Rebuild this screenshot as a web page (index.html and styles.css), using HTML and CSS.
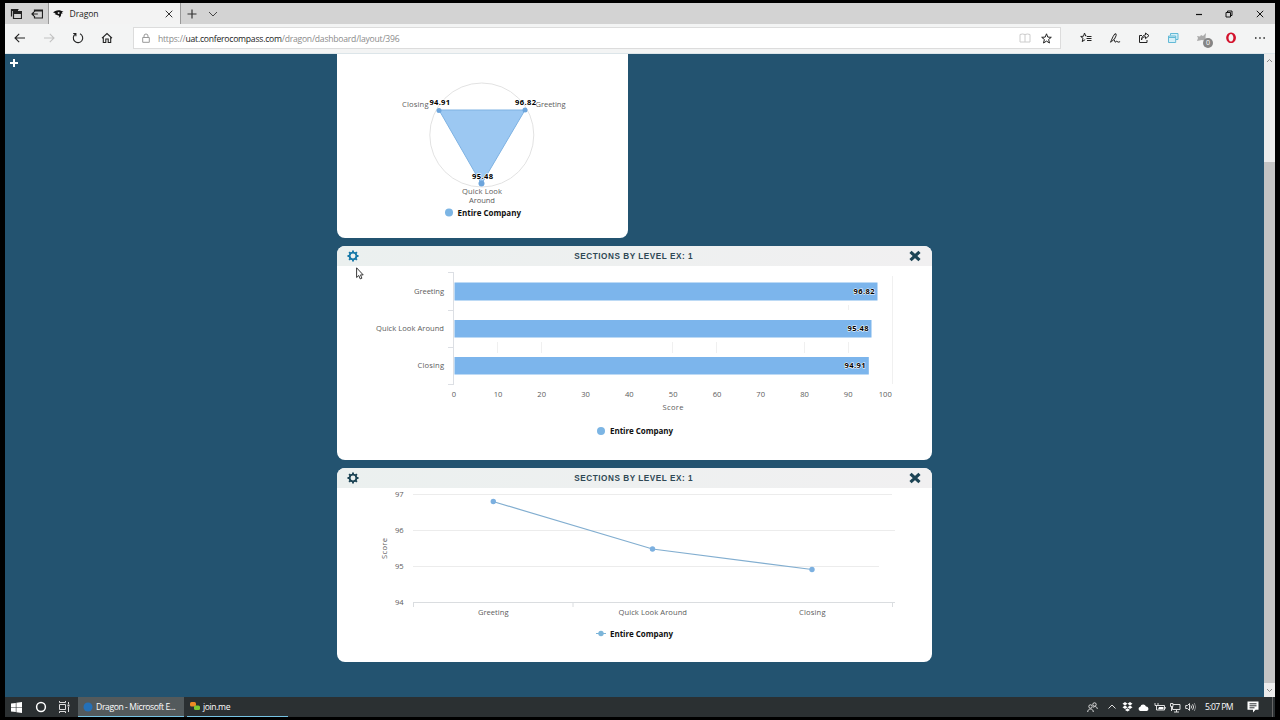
FILE: index.html
```
<!DOCTYPE html>
<html lang="en">
<head>
    <meta charset="UTF-8">
    <meta name="viewport" content="width=device-width, initial-scale=1.0">
    <title>Dragon</title>
    <link rel="stylesheet" href="styles.css">
</head>
<body>
    <div class="screen">
        <div class="tabs">
            <div class="tab-tools">
                <svg width="12" height="12" viewBox="0 0 12 12"><path d="M3.5 3.5h8v7h-8zM3.5 5.5h8M1.5 8.500v-7h7" fill="none" stroke="#222" stroke-width="1.2"/><path d="M1 1h7v2H1zM4 4h7v1.500H4z" fill="#222"/></svg>
                <svg width="12" height="12" viewBox="0 0 12 12"><path d="M3.500 4V2h8v8h-8V8M3.500 3h8M0.800 6h6M3 4L1 6l2 2" fill="none" stroke="#222" stroke-width="1.2"/></svg>
            </div>
            <div class="tab">
                <svg class="favicon" width="11" height="10" viewBox="0 0 11 10"><path d="M0 3.500C2 1 7 0 10.500 3L8.800 3.300 9.500 5 8 4.600C8.500 7 7.500 8.500 5.500 8.500 7 7.500 6 6.500 4.500 6.300L1.500 5l1.300-.8z" fill="#111"/><circle cx="5.600" cy="4" r="1" fill="#ddd"/></svg>
                <span class="tab-title">Dragon</span>
                <svg width="8" height="8" viewBox="0 0 8 8"><path d="M.7.7l6.600 6.600M7.300.7L.7 7.300" stroke="#333" fill="none"/></svg>
            </div>
            <svg class="new-tab" width="10" height="10" viewBox="0 0 10 10"><path d="M5 .5v9M.5 5h9" stroke="#333" stroke-width="1.200"/></svg>
            <svg width="10" height="6" viewBox="0 0 10 6"><path d="M1 1l4 4 4-4" stroke="#444" fill="none"/></svg>
            <div class="window-buttons">
                <span><svg width="8" height="8" viewBox="0 0 8 8"><path d="M1 4.500h6" stroke="#111" stroke-width="1.200"/></svg></span>
                <span><svg width="8" height="8" viewBox="0 0 8 8"><path d="M1 2.500h4.500V7H1zM2.500 2V1H7v4.500H6" stroke="#111" fill="none"/></svg></span>
                <span><svg width="8" height="8" viewBox="0 0 8 8"><path d="M.8.8l6.400 6.400M7.200.8L.8 7.200" stroke="#111" fill="none"/></svg></span>
            </div>
        </div>

        <div class="toolbar">
            <span class="tool"><svg width="12" height="10" viewBox="0 0 12 10"><path d="M11 5H1M5.200.8L1 5l4.200 4.200" stroke="#222" stroke-width="1.100" fill="none"/></svg></span>
            <span class="tool"><svg width="12" height="10" viewBox="0 0 12 10"><path d="M1 5h10M6.800.8L11 5 6.800 9.200" stroke="#c2c2c2" stroke-width="1.100" fill="none"/></svg></span>
            <span class="tool"><svg width="12" height="12" viewBox="0 0 12 12"><path d="M3.500 2A4.700 4.700 0 1 0 8 1.700M1.200 1.500h2.700v2.700" stroke="#222" stroke-width="1.100" fill="none"/></svg></span>
            <span class="tool"><svg width="12" height="12" viewBox="0 0 12 12"><path d="M1 6.200L6 1.500l5 4.700M2.300 5.200V10.500h2.500V7h2.400v3.500h2.500V5.200" stroke="#222" stroke-width="1.100" fill="none"/></svg></span>
            <div class="address">
                <svg width="8" height="10" viewBox="0 0 8 10"><path d="M.7 4.500h6.600v4.800H.7zM2 4.500V3a2 2 0 0 1 4 0v1.500" stroke="#999" fill="none"/></svg>
                <div class="url">https://<span>uat.conferocompass.com</span>/dragon/dashboard/layout/396</div>
                <svg class="reading" width="12" height="10" viewBox="0 0 12 10"><path d="M1 1.500q2.500-1 5 0 2.500-1 5 0v7.500H1zM6 1.500V9" stroke="#ccc" fill="none"/></svg>
                <svg width="11" height="11" viewBox="0 0 11 11"><path d="M5.500.8l1.300 3.300 3.500.2-2.700 2.200.9 3.500-3-1.900-3 1.900.9-3.500L.7 4.300l3.500-.2z" stroke="#222" fill="none"/></svg>
            </div>
            <div class="tools">
                <span class="tool"><svg width="12" height="12" viewBox="0 0 12 12"><path d="M6.500 4H5.700L4.500 1 3.500 4.200.7 4.500 3 6.300l-.8 3.300 3-2M7 4.500h4.500M6.500 6.500h5M7 8.500h4.500" stroke="#222" fill="none"/></svg></span>
                <span class="tool"><svg width="12" height="12" viewBox="0 0 12 12"><path d="M1.500 10.200L4 4.700Q6 .7 7 1.800T5.500 7L2.500 9.600zM5 7.500l1.200 2.700 1.600-1 1.300 1 2-.5" stroke="#222" fill="none"/></svg></span>
                <span class="tool"><svg width="12" height="12" viewBox="0 0 12 12"><path d="M4 3.500H1.500v7h7.500V8M3.500 8C4 5.500 5.500 4.700 7.500 4.700v2L11 3.600 7.500 1v1.900C5 3 3.700 5 3.500 8z" stroke="#222" fill="none"/></svg></span>
                <span class="tool"><svg width="12" height="12" viewBox="0 0 12 12"><path d="M3.500 3.500V1.500h7.500v6H9M1.500 4h7.200v6.500H1.500zM1.500 5.500h7.200" stroke="#62b9d6" fill="#d5eff7"/></svg></span>
                <span class="tool extension">
                    <svg width="12" height="12" viewBox="0 0 12 12"><path d="M1 9l1-3-1-2 3 .5L5 3l2 1 3-3-.5 4L10 9l-4-1z" fill="#aaa"/></svg>
                    <span class="badge">0</span>
                </span>
                <span class="tool"><svg width="12" height="12" viewBox="0 0 12 12"><path d="M6 .5a4.900 5.300 0 1 0 .1 0zM6 2a2.400 3.800 0 1 1-.1 0z" fill="#d3122c" fill-rule="evenodd"/></svg></span>
                <span class="tool"><svg width="12" height="4" viewBox="0 0 12 4"><path d="M1 1.300h1.500v1.500H1zM5.200 1.300h1.500v1.500H5.200zM9.400 1.300h1.500v1.500H9.400z" fill="#222"/></svg></span>
            </div>
        </div>

        <div class="page">
            <svg class="add" width="8" height="8" viewBox="0 0 8 8"><path d="M4 0v8M0 4h8" stroke="#fff" stroke-width="2"/></svg>

            <div class="dashboard">
                <div class="card radar">
                    <svg class="chart" width="290" height="184" viewBox="337 54 290 184">
                        <circle cx="481.800" cy="135" r="52" fill="none" stroke="#e2e2e2"/>
                        <path d="M525 110L481.500 184 439 110z" fill="#9cc8f2" stroke="#7eb2e2"/>
                        <g fill="#6da5dc">
                            <circle cx="525" cy="110" r="2.500"/>
                            <circle cx="439" cy="110.500" r="2.500"/>
                            <circle cx="481.500" cy="183.500" r="3"/>
                        </g>
                        <g class="label">
                            <text x="402" y="106.500" textLength="26.500">Closing</text>
                            <text x="535.500" y="106.500" textLength="30">Greeting</text>
                            <text x="462" y="194" textLength="40">Quick Look</text>
                            <text x="469" y="203" textLength="26">Around</text>
                        </g>
                        <g class="value">
                            <text x="429.500" y="105" textLength="20.500">94.91</text>
                            <text x="515" y="104.500" textLength="21">96.82</text>
                            <text x="472" y="179" textLength="21">95.48</text>
                        </g>
                        <circle cx="449" cy="212.500" r="4" fill="#7cb5e4"/>
                        <text class="legend" x="457.500" y="216" textLength="63.500">Entire Company</text>
                    </svg>
                </div>

                <div class="card bars">
                    <div class="card-header">
                        <svg class="gear active" width="12" height="12" viewBox="0 0 12 12"><circle cx="6" cy="6" r="3.400"/><path d="M6 .5v2M6 9.500v2M.5 6h2M9.500 6h2M2.100 2.100l1.400 1.400M8.500 8.500l1.400 1.400M9.900 2.100L8.500 3.500M3.500 8.500L2.100 9.900"/></svg>
                        <h2>SECTIONS BY LEVEL EX: 1</h2>
                        <svg class="close" width="12" height="12" viewBox="0 0 12 12"><path d="M1.500 1.800l9 8.400M10.500 1.800l-9 8.400"/></svg>
                    </div>
                    <svg class="chart" width="594" height="194" viewBox="337 266 594 194">
                        <path d="M892.500 276v108M848.500 305v5M848.500 342v11M804.500 342v11M716.500 342v11M672.500 342v11M541.500 342v11M497.500 342v11" stroke="#f0f0f0"/>
                        <path d="M453.500 272v113M448 272.500h5M448 310.500h5M448 347.500h5M448 384.500h5" stroke="#dcdfe4" fill="none"/>
                        <g fill="#7cb5ec">
                            <rect x="454.500" y="282.500" width="423" height="18"/>
                            <rect x="454.500" y="320" width="417" height="17.500"/>
                            <rect x="454.500" y="357" width="414.300" height="17.500"/>
                        </g>
                        <g class="label">
                            <text x="414" y="294" textLength="30">Greeting</text>
                            <text x="376" y="331.400" textLength="68">Quick Look Around</text>
                            <text x="417.500" y="368.400" textLength="26.500">Closing</text>
                            <text x="662.500" y="410.300" textLength="21">Score</text>
                        </g>
                        <g class="label middle">
                            <text x="454" y="397">0</text>
                            <text x="498" y="397">10</text>
                            <text x="541.700" y="397">20</text>
                            <text x="585.500" y="397">30</text>
                            <text x="629.300" y="397">40</text>
                            <text x="673.200" y="397">50</text>
                            <text x="717" y="397">60</text>
                            <text x="760.700" y="397">70</text>
                            <text x="804.500" y="397">80</text>
                            <text x="848.200" y="397">90</text>
                            <text x="885.300" y="397">100</text>
                        </g>
                        <g class="value">
                            <text x="853.500" y="294.400" textLength="21">96.82</text>
                            <text x="847.500" y="331.400" textLength="21">95.48</text>
                            <text x="844.500" y="368.400" textLength="21">94.91</text>
                        </g>
                        <circle cx="601" cy="431" r="4" fill="#7cb5e4"/>
                        <text class="legend" x="610" y="434.300" textLength="63">Entire Company</text>
                    </svg>
                </div>

                <div class="card line">
                    <div class="card-header">
                        <svg class="gear" width="12" height="12" viewBox="0 0 12 12"><circle cx="6" cy="6" r="3.400"/><path d="M6 .5v2M6 9.500v2M.5 6h2M9.500 6h2M2.100 2.100l1.400 1.400M8.500 8.500l1.400 1.400M9.900 2.100L8.500 3.500M3.500 8.500L2.100 9.900"/></svg>
                        <h2>SECTIONS BY LEVEL EX: 1</h2>
                        <svg class="close" width="12" height="12" viewBox="0 0 12 12"><path d="M1.500 1.800l9 8.400M10.500 1.800l-9 8.400"/></svg>
                    </div>
                    <svg class="chart" width="594" height="174" viewBox="337 488 594 174">
                        <path d="M413 494.500h479M413 530.500h482M413 566.500h466" stroke="#ececec"/>
                        <path d="M413 602.500h482M413.500 602v5M573 602v5M892.500 602v5" stroke="#dadde0" fill="none"/>
                        <path d="M493 501.500L652.500 549 812 569.500" stroke="#82aed0" stroke-width="1.200" fill="none"/>
                        <g fill="#7cb0e0">
                            <circle cx="493.300" cy="501.500" r="2.700"/>
                            <circle cx="652.500" cy="549" r="2.700"/>
                            <circle cx="812" cy="569.500" r="2.700"/>
                        </g>
                        <g class="label">
                            <text x="395" y="497.400">97</text>
                            <text x="395" y="533.400">96</text>
                            <text x="395" y="569.400">95</text>
                            <text x="395" y="605">94</text>
                            <text x="478" y="615" textLength="30.500">Greeting</text>
                            <text x="618.500" y="615" textLength="68.500">Quick Look Around</text>
                            <text x="799" y="615" textLength="26.500">Closing</text>
                            <text transform="translate(387 559) rotate(-90)" textLength="21">Score</text>
                        </g>
                        <path d="M596 633.500h10" stroke="#7cb5d9"/>
                        <circle cx="601" cy="633.500" r="2.700" fill="#7cb5d9"/>
                        <text class="legend" x="610" y="637" textLength="63">Entire Company</text>
                    </svg>
                </div>
            </div>

            <svg class="cursor" width="8" height="13" viewBox="0 0 8 13"><path d="M.6.8v9.700l2.200-2 1.400 3.400 1.700-.7-1.400-3.300h2.700z" fill="#fff" stroke="#222" stroke-width=".9"/></svg>

            <div class="scrollbar">
                <svg width="7" height="5" viewBox="0 0 7 5"><path d="M1 4l2.500-2.500L6 4" stroke="#888" fill="none"/></svg>
                <div class="thumb"></div>
                <svg width="7" height="5" viewBox="0 0 7 5"><path d="M1 1l2.500 2.500L6 1" stroke="#888" fill="none"/></svg>
            </div>
        </div>

        <div class="taskbar">
            <span class="start"><svg width="11" height="11" viewBox="0 0 11 11"><path d="M0 1.600L4.800.9V5.200H0zM5.400.8L11 0v5.200H5.400zM0 5.800h4.800v4.300L0 9.400zM5.400 5.800H11V11l-5.600-.8z" fill="#fff"/></svg></span>
            <span class="start"><svg width="12" height="12" viewBox="0 0 12 12"><circle cx="6" cy="6" r="4.400" fill="none" stroke="#fff" stroke-width="1.500"/></svg></span>
            <span class="start"><svg width="12" height="12" viewBox="0 0 12 12"><path d="M1.500 3.500h6v5h-6zM1.500 0v1.500h6V0M1.500 12v-1.500h6V12M10.500 1v2M10.500 6v5" stroke="#ddd" fill="none"/><path d="M9.500 3.500h2v2h-2z" fill="#ddd"/></svg></span>
            <div class="task current">
                <svg width="10" height="10" viewBox="0 0 10 10"><circle cx="5" cy="5" r="4.500" fill="#2370b8"/></svg>
                <span>Dragon - Microsoft E...</span>
            </div>
            <div class="task">
                <svg width="10" height="9" viewBox="0 0 10 9"><rect x="0" y="0" width="6" height="4.500" rx="1.500" fill="#f08a24"/><rect x="4" y="3.500" width="6" height="4.500" rx="1.500" fill="#7dc832"/></svg>
                <span>join.me</span>
            </div>
            <div class="tray">
                <span class="people"><svg width="11" height="11" viewBox="0 0 11 11"><circle cx="3.500" cy="4.500" r="1.700"/><circle cx="7.500" cy="2.500" r="1.700"/><path d="M.7 10c0-4 5.600-4 5.600 0M6 5.500C8 3.500 10.300 5 10.300 7"/></svg></span>
                <span><svg width="10" height="10" viewBox="0 0 10 10"><path d="M1.500 6.500L5 3l3.500 3.500"/></svg></span>
                <span><svg width="11" height="10" viewBox="0 0 11 10"><path class="solid" d="M3 0l2.500 1.700L3 3.400.5 1.700zM8 0l2.500 1.700L8 3.400 5.500 1.700zM3 3.600l2.500 1.700L3 7 .5 5.300zM8 3.600l2.500 1.700L8 7 5.500 5.300zM5.500 6.200L8 7.900 5.500 9.500 3 7.900z"/></svg></span>
                <span><svg width="11" height="9" viewBox="0 0 11 9"><path class="solid" d="M2.300 8a2.200 2.200 0 0 1 0-4.300A3 3 0 0 1 8 3.500 2.300 2.300 0 0 1 8.800 8z"/></svg></span>
                <span><svg width="12" height="10" viewBox="0 0 12 10"><path d="M4 3.500h6.500v4.500H2.500V6M11.300 5v1.700M1 1v2.500h3V1M2.500 3.500V6"/><path class="solid" d="M5 5h4.500v2.200H4z"/></svg></span>
                <span><svg width="12" height="11" viewBox="0 0 12 11"><path d="M4 2.500h7v5H3.500V5M5 10h5M7.500 7.500V10M1.500 1.500h2.500v3H1.500zM2.500 4.500V9"/></svg></span>
                <span><svg width="12" height="10" viewBox="0 0 12 10"><path d="M.7 3.500H2.500L4.500 1.500v7L2.500 6.500H.7zM6 3.500q1 1.500 0 3M7.600 2.300q2 2.700 0 5.400"/><path d="M9.300 1q2.700 4 0 8" opacity=".5"/></svg></span>
                <div class="clock">5:07 PM</div>
                <svg class="notify" width="12" height="12" viewBox="0 0 12 12"><path class="solid" d="M.5.5h11v8.300H8.500L6 11.500V8.800H.5z"/><path class="rows" d="M2.500 2.800h7M2.500 4.800h7M2.500 6.800h5"/></svg>
                <div class="peek"></div>
            </div>
        </div>
    </div>
</body>
</html>
```
FILE: styles.css
```
* {
    box-sizing: border-box;
}
body {
    margin: 0;
    background: #000;
    font-family: "Open Sans", "Noto Sans", sans-serif;
    font-size: 8.6px;
    white-space: nowrap;
}
svg {
    display: block;
    flex: none;
}
.screen {
    width: 1280px;
    height: 720px;
    padding: 3px 5px;
    display: flex;
    flex-direction: column;
    overflow: hidden;
}

/* browser */
.tabs {
    height: 21px;
    flex: none;
    display: flex;
    align-items: center;
    background: #d3d3d3;
}
.tab-tools {
    width: 43px;
    padding-left: 5px;
    display: flex;
    gap: 9px;
}
.tab {
    width: 133px;
    height: 21px;
    padding: 0 7px 0 4px;
    display: flex;
    align-items: center;
    background: #f3f3f3;
    border-left: 1px solid #999;
    border-right: 1px solid #999;
}
.tab-title {
    flex: 1;
    margin-left: 5.5px;
    color: #222;
    letter-spacing: -0.1px;
}
.new-tab {
    margin: 0 11px 0 6px;
}
.window-buttons {
    margin-left: auto;
    display: flex;
}
.window-buttons span {
    width: 30.5px;
    display: flex;
    justify-content: center;
}
.toolbar {
    height: 30px;
    flex: none;
    display: flex;
    align-items: center;
    padding-bottom: 1px;
    background: #f3f4f4;
    border-bottom: 1px solid #dce5e9;
}
.tool {
    width: 29px;
    display: flex;
    justify-content: center;
}
.address {
    width: 928px;
    height: 22px;
    margin-left: 12px;
    padding: 0 8px;
    display: flex;
    align-items: center;
    background: #fff;
    border: 1px solid #dcdcdc;
}
.url {
    margin-left: 8px;
    padding-top: 1px;
    color: #8b8b8b;
    letter-spacing: -0.23px;
}
.url span {
    color: #222;
}
.reading {
    margin: 0 10px 0 auto;
}
.tools {
    margin-left: 10.5px;
    display: flex;
    align-items: center;
}
.extension {
    position: relative;
}
.badge {
    position: absolute;
    left: 15.5px;
    top: 6px;
    width: 10px;
    height: 10px;
    border-radius: 5px;
    background: #858585;
    color: #fff;
    font-size: 7px;
    line-height: 10px;
    text-align: center;
}

/* page */
.page {
    position: relative;
    flex: 1;
    display: flex;
    background: #235370;
}
.add {
    margin: 5px 0 0 5px;
}
.dashboard {
    width: 594.5px;
    margin-left: 319px;
    display: flex;
    flex-direction: column;
    gap: 8px;
}
.card {
    flex: none;
    background: #fff;
    border-radius: 8px;
    overflow: hidden;
}
.radar {
    width: 290.5px;
    height: 183.5px;
    border-radius: 0 0 8px 8px;
}
.bars {
    height: 214.5px;
}
.line {
    height: 194px;
}
.card-header {
    height: 20px;
    padding: 0 11px 0 10px;
    display: flex;
    align-items: center;
    justify-content: space-between;
    background: linear-gradient(to right, #ebf0ef, #f1f0f1);
}
.card-header h2 {
    margin: 0;
    padding-top: 1px;
    font: bold 8.2px "Liberation Sans", Arial, sans-serif;
    letter-spacing: 0.53px;
    color: #2f4855;
}
.gear {
    fill: none;
    stroke: #1d4455;
    stroke-width: 1.9;
}
.gear.active {
    stroke: #1678a8;
}
.close {
    stroke: #1d4455;
    stroke-width: 3.2;
}
.label {
    font-size: 7.6px;
    fill: #5c5c5c;
}
.middle {
    text-anchor: middle;
}
.value {
    font-size: 7.6px;
    font-weight: bold;
    fill: #000;
    stroke: #fff;
    stroke-width: 1px;
    paint-order: stroke;
}
.legend {
    font-size: 8px;
    font-weight: bold;
    fill: #111;
}
.cursor {
    position: absolute;
    left: 350.5px;
    top: 213px;
}
.scrollbar {
    width: 11px;
    margin-left: auto;
    padding: 4px 0;
    display: flex;
    flex-direction: column;
    align-items: center;
    background: #ececec;
}
.thumb {
    width: 11px;
    height: 521px;
    margin: auto 0 5px;
    background: #c4c4c4;
}

/* taskbar */
.taskbar {
    height: 20px;
    flex: none;
    display: flex;
    align-items: center;
    background: #2b3032;
    color: #fff;
}
.start {
    width: 23.7px;
    display: flex;
    justify-content: center;
}
.task {
    width: 101px;
    height: 20px;
    padding-left: 3px;
    display: flex;
    align-items: center;
    gap: 3px;
    border-bottom: 1px solid #76c3e4;
    letter-spacing: -0.4px;
}
.task.current {
    width: 106px;
    margin: 0 3px 0 2px;
    padding-left: 5px;
    background: #535a5c;
}
.tray {
    flex: 1;
    display: flex;
    align-items: center;
    justify-content: flex-end;
    padding-right: 2px;
}
.tray span {
    width: 15.8px;
    display: flex;
    justify-content: center;
}
.tray .people {
    margin-right: 4px;
}
.tray path,
.tray circle {
    fill: none;
    stroke: #ddd;
}
.tray .solid {
    fill: #fff;
    stroke: none;
}
.tray .rows {
    stroke: #2b3032;
}
.clock {
    width: 30px;
    margin: 0 12px 0 6px;
    letter-spacing: -0.6px;
}
.peek {
    width: 1px;
    height: 20px;
    margin-left: 13px;
    background: #666;
}
```
